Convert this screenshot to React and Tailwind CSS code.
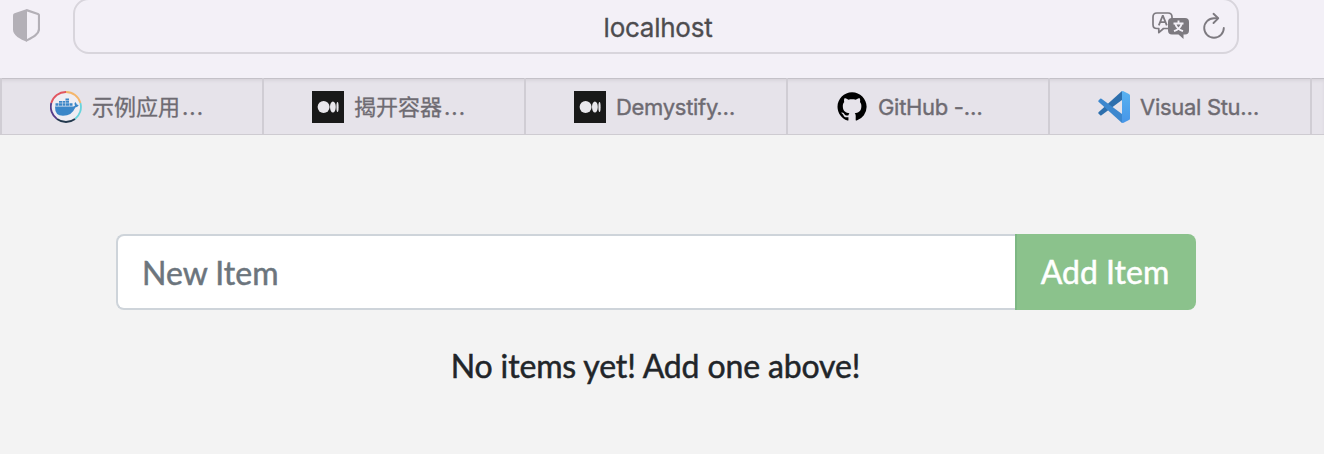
import React from "react";

function Shield() {
  return (
    <svg className="mt-2 ml-3 h-9 w-7 shrink-0" viewBox="0 0 28 36">
      <path d="M14.500 2.100 L26 6 Q27 6.400 27 7.500 V21 C27 26.500 20.500 29.500 14.500 32.500" fill="none" stroke="#b3b0b7" strokeWidth="2.200" strokeLinejoin="round" />
      <path d="M15 1 L2.500 5.200 Q1 5.800 1 7.500 V21.500 C1 27.500 8 31 15 34 Z" fill="#b3b0b7" />
    </svg>
  );
}

function Translate() {
  return (
    <svg className="h-7 w-[38px]" viewBox="0 0 38 28">
      <path d="M16 16.500 H11.500 L6.800 20.600 V16.500 H5 Q1 16.500 1 12.500 V5 Q1 1 5 1 H16 Q20 1 20 5 V7" fill="none" stroke="#7d7a80" strokeWidth="1.700" strokeLinejoin="round" />
      <path d="M6.800 13.300 L10.600 4 H11 L14.800 13.300 M8.200 10.200 H13.400" fill="none" stroke="#7d7a80" strokeWidth="1.800" />
      <path d="M21 6 H33 Q37 6 37 10 V18.500 Q37 22.500 33 22.500 H31.500 V27 L26.500 22.500 H20 Q16 22.500 16 18.500 V10 Q16 6 20 6 Z" fill="#7d7a80" />
      <path d="M26.500 8.500 V11 M21.500 11.500 H31.500 M23.300 12 Q25 17 31 19.200 M29.700 12 Q28 17 22 19.200" fill="none" stroke="#f3f0f7" strokeWidth="1.900" />
    </svg>
  );
}

function Reload() {
  return (
    <svg className="h-7 w-6" viewBox="0 0 24 28">
      <path d="M15.500 6.200 H12 A9.800 9.800 0 1 0 21.800 16" fill="none" stroke="#7d7a80" strokeWidth="1.900" strokeLinecap="round" />
      <path d="M11.500 1.800 L16.200 6.300 L11.500 11" fill="none" stroke="#7d7a80" strokeWidth="1.900" strokeLinecap="round" strokeLinejoin="round" />
    </svg>
  );
}

function Docker() {
  return (
    <svg className="size-8" viewBox="0 0 32 32">
      <circle cx="16" cy="16" r="14" fill="#efedf3" />
      <g fill="none" strokeWidth="1.800">
        <path d="M1.300 12 A15 15 0 0 1 16 1" stroke="#e25560" />
        <path d="M16 1 A15 15 0 0 1 30.400 12" stroke="#f5b66b" />
        <path d="M30.400 12 A15 15 0 0 1 25 28" stroke="#68d4dc" />
        <path d="M25 28 A15 15 0 0 1 7 28" stroke="#22384d" />
        <path d="M7 28 A15 15 0 0 1 1.300 12" stroke="#563b88" />
      </g>
      <g fill="#3b86c8">
        <path d="M5 15.400 H23.500 Q24.800 15.200 25 14.500 Q23.800 12.500 25.200 11 Q26.600 12 26.800 13.500 Q28 13.500 28.700 14.300 Q27.700 16.400 25.300 16.400 Q21.800 24.800 13 24.800 Q4.800 24.800 5 15.400Z" />
        <path d="M5.500 12.200h3v2.600h-3z M9 12.200h3v2.600H9z M12.500 12.200h3v2.600h-3z M16 12.200h3v2.600h-3z M19.500 12.200h3v2.600h-3z M9 10h3v1.800H9z M12.500 10h3v1.800h-3z M16 10h3v1.800h-3z M15.500 7.500h3.500v2h-3.500z" />
      </g>
    </svg>
  );
}

function Medium() {
  return (
    <svg className="size-8" viewBox="0 0 32 32">
      <path d="M0 0H32V32H0Z" fill="#191919" />
      <g fill="#e9e7ec">
        <circle cx="11.600" cy="16" r="6" />
        <ellipse cx="20.900" cy="16" rx="2.900" ry="5.600" />
        <ellipse cx="25.500" cy="16" rx="1.100" ry="5" />
      </g>
    </svg>
  );
}

function GitHub() {
  return (
    <svg className="size-8" viewBox="0 0 32 32">
      <path transform="translate(1.500 1.200) scale(1.820)" d="M8 0C3.580 0 0 3.580 0 8c0 3.540 2.290 6.530 5.470 7.590.4.070.55-.17.55-.38 0-.19-.01-.82-.01-1.490-2.010.37-2.530-.49-2.690-.94-.09-.23-.48-.94-.82-1.130-.28-.15-.68-.52-.01-.53.63-.01 1.080.58 1.230.82.72 1.210 1.870.87 2.330.66.070-.52.28-.87.51-1.070-1.780-.2-3.640-.89-3.640-3.950 0-.87.31-1.590.82-2.150-.08-.2-.36-1.020.08-2.120 0 0 .67-.21 2.200.82.64-.18 1.320-.27 2-.27s1.360.09 2 .27c1.530-1.040 2.200-.82 2.200-.82.44 1.100.16 1.920.08 2.120.51.56.82 1.270.82 2.150 0 3.070-1.870 3.750-3.650 3.950.29.25.54.73.54 1.480 0 1.070-.01 1.930-.01 2.200 0 .21.15.46.55.38A8.010 8.010 0 0 0 16 8c0-4.420-3.580-8-8-8z" />
    </svg>
  );
}

function VSCode() {
  return (
    <svg className="size-8" viewBox="0 0 32 32">
      <defs>
        <linearGradient id="panel" x1="0" y1="0" x2="0" y2="1">
          <stop stopColor="#58b2f1" />
          <stop offset="1" stopColor="#4796e8" />
        </linearGradient>
      </defs>
      <path d="M24 0 L0.500 21.200 Q0 22 0.500 22.600 L2.200 24.200 Q2.800 24.600 3.500 24.200 L25 8.200 Z" fill="#2d6fad" />
      <path d="M24 32 L0.500 10.800 Q0 10 0.500 9.400 L2.200 7.800 Q2.800 7.400 3.500 7.800 L25 23.800 Z" fill="#3c87ce" />
      <path d="M23.700 0.500 Q24.500 -0.200 25.500 0.300 L31 3 Q32 3.500 32 4.500 V27.500 Q32 28.500 31 29 L25.500 31.700 Q24.500 32.200 23.700 31.500 Q24 31 24 30 V2 Q24 1 23.700 .5Z" fill="url(#panel)" />
    </svg>
  );
}

const tabs = [
  { icon: Docker, text: "示例应用", dots: true },
  { icon: Medium, text: "揭开容器", dots: true },
  { icon: Medium, text: "Demystify…" },
  { icon: GitHub, text: "GitHub -…" },
  { icon: VSCode, text: "Visual Stu…" },
];

export default function App() {
  return (
    <div className="flex h-[454px] w-[1324px] flex-col overflow-hidden bg-[#f3f3f3] font-['Inter','Noto_Sans_CJK_SC',sans-serif]">
      <header className="flex h-[78px] shrink-0 items-start bg-[#f3f0f7]">
        <Shield />
        <div className="-mt-0.5 ml-[33px] grid h-14 w-[1166px] grid-cols-[1fr_auto_1fr] items-center rounded-[16px] border-2 border-[#d8d5dc]">
          <span />
          <span className="pt-1 pl-1 text-[26px] leading-8 tracking-[-0.25px] text-[#4d4c4f] [-webkit-text-stroke:0.3px]">localhost</span>
          <div className="flex items-center justify-end gap-3 pr-[11px]">
            <Translate />
            <Reload />
          </div>
        </div>
      </header>
      <nav className="flex h-[57px] shrink-0 border-b border-[#cecbd1] bg-[#e6e3ea] shadow-[inset_0_1px_0_#c4c1c8,inset_0_3px_3px_#d8d5dc]">
        {tabs.map(({ icon: Icon, text, dots }, i) => (
          <div key={i} className="flex w-[262px] shrink-0 items-center border-l-2 border-[#d0cdd4] pt-px pl-12">
            <Icon />
            {dots ? (
              <span className="ml-2.5 flex text-[22px] leading-8 text-[#6e6b72] [-webkit-text-stroke:0.3px]">
                {text}
                <span className="ml-0.5 tracking-[1px]">...</span>
              </span>
            ) : (
              <span className="ml-2.5 text-[22px] leading-8 tracking-[-0.3px] text-[#6e6b72] [-webkit-text-stroke:0.4px]">{text}</span>
            )}
          </div>
        ))}
        <div className="grow border-l-2 border-[#d0cdd4]" />
      </nav>
      <main className="flex flex-col px-[116px] pt-[99px] font-['Lato',sans-serif] text-[32px] [-webkit-text-stroke:0.5px]">
        <form className="flex h-[76px] w-[1080px]">
          <input
            type="text"
            placeholder="New Item"
            className="w-[900px] rounded-l-lg border-2 border-r-0 border-[#ced4da] bg-white px-6 pt-0.5 text-[#6c757d] placeholder:text-[#6c757d]"
          />
          <button type="button" className="-ml-px w-[181px] rounded-r-lg border-l-2 border-[#7db783] bg-[#8bc28c] pr-[3px] text-white">
            Add Item
          </button>
        </form>
        <p className="mt-8 w-[1080px] pr-px text-center leading-[48px] tracking-[-0.14px] text-[#212529]">No items yet! Add one above!</p>
      </main>
    </div>
  );
}
